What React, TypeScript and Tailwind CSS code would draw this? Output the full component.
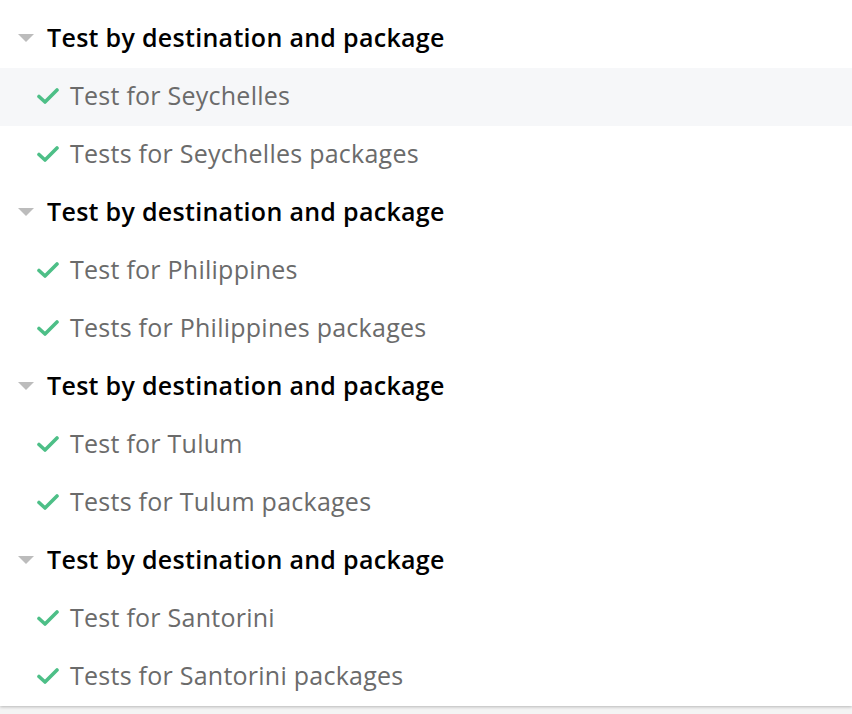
import React from 'react';

const groups = [
  { title: 'Test by destination and package', items: ['Test for Seychelles', 'Tests for Seychelles packages'] },
  { title: 'Test by destination and package', items: ['Test for Philippines', 'Tests for Philippines packages'] },
  { title: 'Test by destination and package', items: ['Test for Tulum', 'Tests for Tulum packages'] },
  { title: 'Test by destination and package', items: ['Test for Santorini', 'Tests for Santorini packages'] },
];

function Caret() {
  return (
    <svg width="16" height="8" viewBox="0 0 16 8" className="shrink-0">
      <path d="M0 0 L16 0 L8 8 Z" fill="#bcbcbc" />
    </svg>
  );
}

function Check() {
  return (
    <svg width="22" height="16" viewBox="0 0 22 16" className="shrink-0">
      <path d="M2 8.5 L8 14 L20 2" fill="none" stroke="#4dbf87" strokeWidth="3.6" strokeLinecap="round" strokeLinejoin="round" />
    </svg>
  );
}

export default function App() {
  return (
    <div className="min-h-screen bg-[#f4f4f4]" style={{ fontFamily: '"Open Sans", "Noto Sans", sans-serif' }}>
      <div className="bg-white pt-[10px] shadow-[0_1px_3px_rgba(0,0,0,0.25)]">
        {groups.map((g, gi) => (
          <div key={gi}>
            <div className="h-[58px] flex items-center pl-[18px] pb-[3px]">
              <Caret />
              <span className="ml-[13px] text-[25px] font-semibold tracking-[0.3px] text-black">{g.title}</span>
            </div>
            {g.items.map((it, ii) => (
              <div
                key={ii}
                className={`h-[58px] flex items-center pl-[37px] pb-[2px] ${gi === 0 && ii === 0 ? 'bg-[#f6f7f9]' : ''}`}
              >
                <Check />
                <span className="ml-[11px] text-[25px] tracking-[0.25px] text-[#6b6b6b]">{it}</span>
              </div>
            ))}
          </div>
        ))}
      </div>
    </div>
  );
}
